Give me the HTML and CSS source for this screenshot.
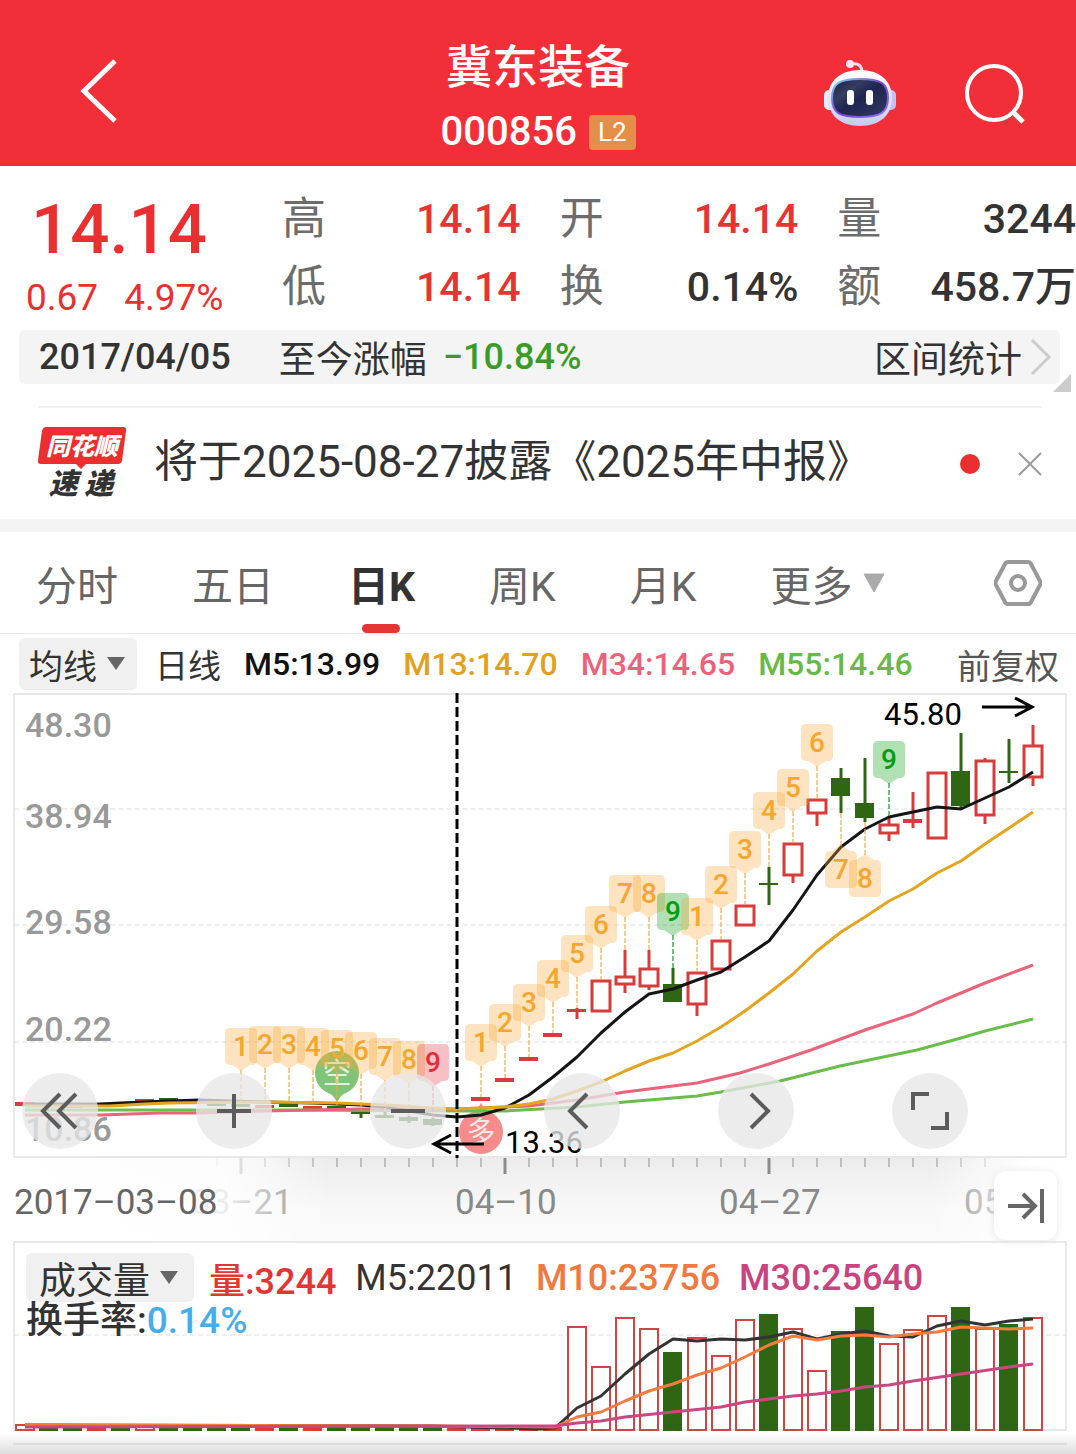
FILE: index.html
```
<!DOCTYPE html>
<html lang="zh-CN">
<head>
    <meta charset="UTF-8">
    <meta name="viewport" content="width=device-width, initial-scale=1.0">
    <title>冀东装备 000856</title>
    <link rel="stylesheet" href="styles.css">
</head>
<body>
    <header class="header">
        <button class="icon-btn back" aria-label="返回">
            <svg width="38" height="64" viewBox="0 0 38 64"><path d="M35 2L4 32L35 62" fill="none" stroke="#fff" stroke-width="5"/></svg>
        </button>
        <div class="stock">
            <h1>冀东装备</h1>
            <div class="stock-code"><span>000856</span><span class="level">L2</span></div>
        </div>
        <div class="header-actions">
            <button class="icon-btn" aria-label="智能助手">
                <svg width="72" height="68" viewBox="0 0 72 68">
                    <defs>
                        <linearGradient id="shell" x1="0" y1="0" x2="0" y2="1"><stop offset="0" stop-color="#fff"/><stop offset="1" stop-color="#c9c8f3"/></linearGradient>
                        <linearGradient id="rim" x1="0" y1="0" x2="1" y2="1"><stop offset="0" stop-color="#7ed8ee"/><stop offset=".5" stop-color="#7a3fd0"/><stop offset="1" stop-color="#8f7cf5"/></linearGradient>
                        <linearGradient id="face" x1="0" y1="0" x2="1" y2="1"><stop offset="0" stop-color="#1b2146"/><stop offset=".3" stop-color="#343c60"/><stop offset=".5" stop-color="#1e2550"/><stop offset="1" stop-color="#333a62"/></linearGradient>
                    </defs>
                    <path d="M27 4Q38 2 38 13" fill="none" stroke="#f3dfee" stroke-width="3"/>
                    <circle cx="26" cy="4" r="4" fill="#f8e6f0"/>
                    <rect x="0" y="30" width="12" height="20" rx="5" fill="#eeeafd"/>
                    <rect x="60" y="30" width="12" height="20" rx="5" fill="#c2c0f5"/>
                    <path d="M36 10C56 10 68 21 68 38S56 66 36 66S4 55 4 38S16 10 36 10Z" fill="url(#shell)"/>
                    <path d="M36 19C56 19 64 23 64 38S56 57 36 57S8 53 8 38S16 19 36 19Z" fill="url(#face)" stroke="url(#rim)" stroke-width="2"/>
                    <rect x="23" y="30" width="7" height="15" rx="3" fill="#fff"/>
                    <rect x="42" y="30" width="7" height="15" rx="3" fill="#fff"/>
                </svg>
            </button>
            <button class="icon-btn" aria-label="搜索">
                <svg width="62" height="62" viewBox="0 0 62 62"><circle cx="30" cy="30" r="27" fill="none" stroke="#fff" stroke-width="4"/><path d="M48 48L59 59" stroke="#fff" stroke-width="5"/></svg>
            </button>
        </div>
    </header>

    <section class="quote">
        <div class="price">
            <div class="price-now">14.14</div>
            <div class="price-change"><span>0.67</span><span>4.97%</span></div>
        </div>
        <dl class="stats">
            <div><dt>高</dt><dd class="up">14.14</dd></div>
            <div><dt>开</dt><dd class="up">14.14</dd></div>
            <div><dt>量</dt><dd>3244</dd></div>
            <div><dt>低</dt><dd class="up">14.14</dd></div>
            <div><dt>换</dt><dd>0.14%</dd></div>
            <div><dt>额</dt><dd>458.7万</dd></div>
        </dl>
    </section>

    <section class="range">
        <span class="range-date">2017/04/05</span>
        <span>至今涨幅</span>
        <span class="down">−10.84%</span>
        <a href="#range" class="range-link">区间统计
            <svg width="22" height="38" viewBox="0 0 22 38"><path d="M2 2L19 19L2 36" fill="none" stroke="#ccc" stroke-width="3"/></svg>
        </a>
        <i class="corner"></i>
    </section>

    <section class="news">
        <svg class="news-logo" width="88" height="78" viewBox="0 0 88 78">
            <path d="M8 2H85Q89 2 88 6L84 36Q83 39 80 39H48L43 44L38 39H3Q-1 39 0 35L4 6Q5 2 8 2Z" fill="#e9302f"/>
            <text x="44" y="30" class="logo-top">同花顺</text>
            <text x="43" y="69" class="logo-bottom">速 递</text>
        </svg>
        <a href="#news" class="news-title">将于2025-08-27披露《2025年中报》</a>
        <i class="dot"></i>
        <button class="icon-btn" aria-label="关闭">
            <svg width="24" height="24" viewBox="0 0 24 24"><path d="M1 1L23 23M23 1L1 23" stroke="#999" stroke-width="2"/></svg>
        </button>
    </section>

    <nav class="tabs">
        <button class="tab">分时</button>
        <button class="tab">五日</button>
        <button class="tab active">日K</button>
        <button class="tab">周K</button>
        <button class="tab">月K</button>
        <button class="tab">更多<svg width="22" height="20" viewBox="0 0 22 20"><path d="M1 1H21L11 19Z" fill="#aaa" stroke="#aaa" stroke-linejoin="round"/></svg></button>
        <button class="icon-btn settings" aria-label="设置">
            <svg width="48" height="46" viewBox="0 0 48 46"><path d="M14 2H34Q36 2 37 4L46 21Q47 23 46 25L37 42Q36 44 34 44H14Q12 44 11 42L2 25Q1 23 2 21L11 4Q12 2 14 2Z" fill="none" stroke="#999" stroke-width="4"/><circle cx="24" cy="23" r="7" fill="none" stroke="#999" stroke-width="4"/></svg>
        </button>
    </nav>

    <div class="legend">
        <label class="picker">
            <select aria-label="主图指标"><option>均线</option></select>
            <svg width="18" height="14" viewBox="0 0 18 14"><path d="M0 0H18L9 13Z" fill="#666"/></svg>
        </label>
        <span class="legend-name">日线</span>
        <span class="ma5">M5:13.99</span>
        <span class="ma13">M13:14.70</span>
        <span class="ma34">M34:14.65</span>
        <span class="ma55">M55:14.46</span>
        <a href="#adjust" class="adjust">前复权</a>
    </div>

    <section class="chart">
        <svg id="kline" viewBox="0 690 1076 551">
            <defs>
                <linearGradient id="axisBg" x1="0" y1="0" x2="0" y2="1"><stop offset="0" stop-color="#ececec"/><stop offset=".6" stop-color="#f8f8f8"/><stop offset="1" stop-color="#fafafa"/></linearGradient>
                <linearGradient id="fadeLeft"><stop offset="0" stop-color="#fff"/><stop offset=".68" stop-color="#fff" stop-opacity=".85"/><stop offset="1" stop-color="#fff" stop-opacity="0"/></linearGradient>
                <linearGradient id="fadeRight"><stop offset="0" stop-color="#fff" stop-opacity="0"/><stop offset="1" stop-color="#fff"/></linearGradient>
            </defs>
        </svg>
        <div class="tools">
            <button class="tool" aria-label="最早"><svg width="40" height="40" viewBox="0 0 40 40"><path d="M20 3L3 20L20 37M36 3L19 20L36 37"/></svg></button>
            <button class="tool" aria-label="放大"><svg width="40" height="40" viewBox="0 0 40 40"><path d="M20 3V37M3 20H37"/></svg></button>
            <button class="tool" aria-label="缩小"><svg width="40" height="40" viewBox="0 0 40 40"><path d="M3 20H37"/></svg></button>
            <button class="tool" aria-label="左移"><svg width="40" height="40" viewBox="0 0 40 40"><path d="M25 3L8 20L25 37"/></svg></button>
            <button class="tool" aria-label="右移"><svg width="40" height="40" viewBox="0 0 40 40"><path d="M15 3L32 20L15 37"/></svg></button>
            <button class="tool" aria-label="全屏"><svg width="40" height="40" viewBox="0 0 40 40"><path d="M3 19V3H19M21 37H37V21"/></svg></button>
        </div>
        <button class="latest" aria-label="最新"><svg width="40" height="36" viewBox="0 0 40 36"><path d="M2 18H28M17 6L29 18L17 30M36 1V35" fill="none" stroke="#666" stroke-width="4"/></svg></button>
    </section>

    <section class="chart">
        <svg id="volume" viewBox="0 1241 1076 192"></svg>
        <div class="volume-legend">
            <div class="volume-row">
                <label class="picker">
                    <select aria-label="副图指标"><option>成交量</option></select>
                    <svg width="18" height="14" viewBox="0 0 18 14"><path d="M0 0H18L9 13Z" fill="#666"/></svg>
                </label>
                <span class="up">量:3244</span>
                <span class="vol5">M5:22011</span>
                <span class="vol10">M10:23756</span>
                <span class="vol30">M30:25640</span>
            </div>
            <div class="turnover">换手率:<span>0.14%</span></div>
        </div>
    </section>
    <div class="next-panel"></div>

    <script src="chart.js"></script>
</body>
</html>
```
FILE: styles.css
```
*{box-sizing:border-box;margin:0;padding:0}
body{font-family:Roboto,"Noto Sans CJK SC",sans-serif;background:#fff;color:#333;overflow-x:hidden}
button{border:none;background:none;font:inherit;color:inherit;cursor:pointer}
a{color:inherit;text-decoration:none}
svg{display:block}
.icon-btn{display:flex;flex:none}
.up{color:#e43434}
.down{color:#3a9c28;font-weight:500}

.header{display:grid;grid-template-columns:1fr auto 1fr;height:166px;padding:34px 50px 0;background:#f22f38;color:#fff}
.back{align-self:center;justify-self:start;margin:0 0 18px 30px}
.stock{display:flex;flex-direction:column;align-items:center}
.stock h1{font-size:46px;line-height:66px;font-weight:500}
.stock-code{display:flex;align-items:center;gap:12px;font-size:40px;line-height:64px;font-weight:500}
.level{padding:0 9px;border-radius:4px;background:#e38f49;font-size:26px;line-height:35px;font-weight:400}
.header-actions{display:flex;align-items:center;justify-content:flex-end;gap:68px;padding-bottom:12px}

.quote{display:flex;height:164px;padding:19px 0 0 26px}
.price{flex:0 0 256px;color:#e92f30;font-weight:500}
.price-now{padding-left:5px;font-size:69px;line-height:90px}
.price-change{display:flex;gap:26px;font-size:37px;line-height:46px;font-weight:400}
.stats{flex:1;display:grid;grid-template-columns:repeat(3,1fr);align-content:start;column-gap:39px;white-space:nowrap}
.stats div{display:flex;justify-content:space-between;height:68px;line-height:68px;font-size:41px}
.stats dt{font-size:44px;color:#6c6c6c}
.stats dd{font-weight:500}

.range{position:relative;display:flex;align-items:center;height:54px;margin:0 16px 0 19px;padding:0 8px 0 20px;border-radius:6px;background:#f4f4f4;font-size:37px;white-space:nowrap}
.range-date{margin-right:48px;font-size:36px;font-weight:500}
.range .down{margin-left:16px;font-size:36px}
.range-link{display:flex;align-items:center;gap:8px;margin-left:auto}
.corner{position:absolute;right:-11px;bottom:-8px;border-left:18px solid transparent;border-bottom:18px solid #ccc}

.news{display:flex;align-items:center;height:113px;margin:22px 34px 0 38px;border-top:2px solid #f2f2f2}
.news-logo{flex:none;margin-right:28px;overflow:visible}
.logo-top,.logo-bottom{font-family:"Noto Sans CJK SC",sans-serif;font-weight:900;font-style:italic;text-anchor:middle}
.logo-top{font-size:24px;fill:#fff}
.logo-bottom{font-size:29px;fill:#333}
.news-title{flex:1;font-size:44px;line-height:56px;padding-bottom:4px;white-space:nowrap}
.dot{width:20px;height:20px;margin-right:38px;border-radius:50%;background:#e9302f}

.tabs{display:flex;gap:74px;height:115px;padding:0 34px 0 36px;border-top:13px solid #f4f4f4;border-bottom:1px solid #e8e8e8;font-size:41px;color:#666}
.tab{position:relative;display:flex;align-items:center;gap:10px;white-space:nowrap}
.tab.active{color:#333;font-weight:700}
.tab.active::after{content:"";position:absolute;left:50%;bottom:0;width:38px;height:9px;margin-left:-20px;border-radius:5px;background:#e43434}
.settings{align-items:center;margin-left:auto}

.legend{display:flex;align-items:center;gap:23px;height:56px;padding:4px 17px 0 19px;font-size:32px;font-weight:500;white-space:nowrap}
.picker{display:flex;align-items:center;gap:10px;height:52px;padding:0 12px 0 10px;border-radius:6px;background:#f0f0f0}
.picker select{border:none;background:none;appearance:none;outline:none;font:400 34px "Noto Sans CJK SC",sans-serif;color:#333}
.legend-name{margin-left:-5px;font-size:33px;font-weight:400}
.ma5{color:#111}
.ma13{color:#e3a01d}
.ma34{color:#ec627a}
.ma55{color:#66ba48}
.adjust{margin-left:auto;font-size:34px;font-weight:400;color:#555}

.chart{position:relative}
.chart>svg{width:100%;height:auto}
.scale{font-size:34px;font-weight:500;fill:#999}
.date{font-size:35px;fill:#888}
.date.current{fill:#666}
.extreme{font-size:31px;fill:#000}
.tag{font-size:28px;font-weight:500;text-anchor:middle}
.pin{font-size:29px;fill:#fff;fill-opacity:.8;text-anchor:middle}
.tools{position:absolute;left:2%;right:10%;bottom:92px;display:flex;justify-content:space-between}
.tool{display:flex;align-items:center;justify-content:center;width:76px;height:76px;border-radius:50%;background:rgba(231,231,231,.78)}
.tool path{fill:none;stroke:#5c5c5c;stroke-width:4}
.latest{position:absolute;right:19px;bottom:1px;display:flex;align-items:center;justify-content:center;width:63px;height:69px;border-radius:12px;background:#fff;box-shadow:0 1px 8px rgba(0,0,0,.1)}

.volume-legend{position:absolute;left:26px;top:12px;font-size:36px;font-weight:500;white-space:nowrap}
.volume-row{display:flex;align-items:center;gap:19px;height:49px}
.volume-row .picker{height:49px;padding:0 16px 0 13px;margin-right:-4px}
.volume-row select{font-size:37px}
.vol5{font-weight:400}
.vol10{color:#f0793f}
.vol30{color:#c9447f}
.turnover{font-size:37px;line-height:38px}
.turnover span{color:#44aeed}
.next-panel{height:21px;background:linear-gradient(#fff,#dedede)}
.next-panel::before{content:"";display:block;height:21px;margin:0 9px 0 13px;background:linear-gradient(#dcdcdc,#dcdcdc) 0 10px/100% 2px no-repeat}
```
FILE: chart.js
```
const NS = 'http://www.w3.org/2000/svg';
const RED = '#d93a3a';
const GREEN = '#2f6614';

function add(parent, name, attrs, text) {
    const el = document.createElementNS(NS, name);
    Object.entries(attrs).forEach(([key, value]) => el.setAttribute(key, value));
    if (text) el.textContent = text;
    parent.appendChild(el);
    return el;
}

function line(parent, x1, y1, x2, y2, stroke, width, dash) {
    add(parent, 'line', {x1, y1, x2, y2, stroke, 'stroke-width': width, 'stroke-dasharray': dash || 'none'});
}

function curve(parent, points, stroke) {
    add(parent, 'polyline', {points, fill: 'none', stroke, 'stroke-width': 3, 'stroke-linejoin': 'round'});
}

// x, 最高, 实体上沿, 实体下沿, 最低, 颜色
const candles = [
    [25, 1102, 1102, 1106, 1106, 'r'], [49, 1104, 1104, 1107, 1107, 'g'], [73, 1105, 1105, 1108, 1108, 'r'],
    [97, 1103, 1103, 1106, 1106, 'r'], [121, 1103, 1103, 1106, 1106, 'g'],
    [145, 1099, 1099, 1102, 1102, 'r'], [169, 1098, 1098, 1101, 1101, 'g'], [193, 1099, 1099, 1102, 1102, 'g'],
    [217, 1104, 1104, 1106, 1106, 'g'], [241, 1104, 1104, 1107, 1107, 'g'], [265, 1105, 1105, 1108, 1108, 'r'],
    [289, 1104, 1104, 1107, 1107, 'g'], [313, 1106, 1106, 1109, 1109, 'r'], [337, 1106, 1106, 1109, 1109, 'g'],
    [361, 1111, 1111, 1114, 1118, 'g'], [385, 1112, 1115, 1118, 1118, 'g'], [409, 1116, 1117, 1121, 1123, 'g'],
    [433, 1118, 1119, 1125, 1126, 'g'], [481, 1097, 1097, 1101, 1101, 'r'], [505, 1078, 1078, 1082, 1082, 'r'],
    [529, 1057, 1057, 1061, 1061, 'r'], [553, 1033, 1033, 1037, 1037, 'r'], [577, 1008, 1009, 1012, 1019, 'r'],
    [601, 980, 980, 1012, 1012, 'h'], [625, 950, 976, 985, 993, 'h'], [649, 950, 968, 987, 990, 'h'],
    [673, 968, 984, 1002, 1002, 'g'], [697, 972, 972, 1005, 1016, 'h'], [721, 940, 940, 970, 970, 'h'],
    [745, 905, 905, 926, 926, 'h'], [769, 867, 883, 885, 905, 'g'], [793, 843, 843, 876, 883, 'h'],
    [817, 799, 799, 814, 826, 'h'], [841, 768, 778, 796, 813, 'g'], [865, 758, 803, 818, 822, 'g'],
    [889, 818, 824, 834, 841, 'h'], [913, 792, 819, 823, 828, 'r'], [937, 772, 772, 839, 839, 'h'],
    [961, 733, 771, 806, 808, 'g'], [985, 758, 760, 816, 824, 'h'], [1009, 739, 771, 773, 783, 'g'],
    [1033, 725, 745, 778, 786, 'h']
];

// x, 标签上沿, 数字, 连线终点
const tags = [
    [241, 1028, 1, 1103], [265, 1026, 2, 1104], [289, 1026, 3, 1103], [313, 1028, 4, 1105], [337, 1030, 5, 1105],
    [361, 1032, 6, 1110], [385, 1038, 7, 1112], [409, 1041, 8, 1116], [433, 1044, 9, 1118, 'red'],
    [481, 1024, 1, 1097], [505, 1004, 2, 1078], [529, 984, 3, 1057], [553, 960, 4, 1033], [577, 935, 5, 1008],
    [601, 906, 6, 980], [625, 875, 7, 950], [649, 875, 8, 950], [673, 893, 9, 968, 'green'], [697, 898, 1, 972],
    [721, 866, 2, 940], [745, 831, 3, 905], [769, 792, 4, 867], [793, 769, 5, 843], [817, 724, 6, 799],
    [841, 851, 7, 813], [865, 860, 8, 822], [889, 741, 9, 818, 'green']
];
const tagColors = {
    orange: ['#f9a938', '#f5a62d'],
    red: ['#e83c46', '#dc3038'],
    green: ['#0b9e18', '#089c14']
};

function drawTag([x, y, num, end, color = 'orange'], svg) {
    const [fill, text] = tagColors[color];
    const below = end < y;
    line(svg, x, below ? y - 5 : y + 42, x, end, fill, 2, '5 2');
    svg.lastChild.setAttribute('opacity', .6);
    const pointer = below ? `M${x - 9} ${y}L${x} ${y - 6}L${x + 9} ${y}Z` : `M${x - 9} ${y + 37}L${x} ${y + 43}L${x + 9} ${y + 37}Z`;
    const box = `M${x - 11} ${y}h22q5 0 5 5v27q0 5 -5 5h-22q-5 0 -5 -5v-27q0 -5 5 -5Z`;
    add(svg, 'path', {d: box + pointer, fill, 'fill-opacity': .32});
    add(svg, 'text', {x, y: y + 28, fill: text, class: 'tag'}, String(num));
}

function drawPin(svg, x, y, up, fill, label) {
    const s = up ? -1 : 1;
    add(svg, 'circle', {cx: x, cy: y, r: 22, fill});
    add(svg, 'path', {d: `M${x - 16} ${y + 14 * s}Q${x - 3} ${y + 22 * s} ${x} ${y + 29 * s}Q${x + 3} ${y + 22 * s} ${x + 16} ${y + 14 * s}Z`, fill});
    add(svg, 'text', {x, y: y + 11, class: 'pin'}, label);
}

function drawKline() {
    const svg = document.getElementById('kline');

    // 时间轴
    add(svg, 'rect', {x: 0, y: 1158, width: 1076, height: 83, fill: 'url(#axisBg)'});
    for (let x = 217; x < 1000; x += 24) {
        const major = (x - 241) % 264 === 0;
        line(svg, x, 1158, x, major ? 1174 : 1167, '#8c8c8c', major ? 3 : 1);
    }
    add(svg, 'text', {x: 191, y: 1214, class: 'date'}, '03–21');
    add(svg, 'text', {x: 455, y: 1214, class: 'date'}, '04–10');
    add(svg, 'text', {x: 719, y: 1214, class: 'date'}, '04–27');
    add(svg, 'text', {x: 964, y: 1214, class: 'date'}, '05');
    add(svg, 'rect', {x: 0, y: 1158, width: 330, height: 83, fill: 'url(#fadeLeft)'});
    add(svg, 'rect', {x: 930, y: 1158, width: 100, height: 83, fill: 'url(#fadeRight)'});
    add(svg, 'rect', {x: 1030, y: 1158, width: 46, height: 83, fill: '#fff'});
    add(svg, 'text', {x: 14, y: 1214, class: 'date current'}, '2017–03–08');

    add(svg, 'rect', {x: 14, y: 694, width: 1052, height: 463, fill: 'none', stroke: '#e8e8e8', 'stroke-width': 2});
    [809, 925, 1042].forEach(y => line(svg, 14, y, 1066, y, '#dedede', 1, '5 3'));
    [['48.30', 737], ['38.94', 828], ['29.58', 934], ['20.22', 1041], ['10.86', 1141]].forEach(([label, y]) => {
        add(svg, 'text', {x: 25, y, class: 'scale'}, label);
    });

    drawPin(svg, 337, 1073, false, '#82c477', '空');
    drawPin(svg, 481, 1132, true, '#f58b8b', '多');

    candles.forEach(([x, high, top, bottom, low, type]) => {
        const color = type === 'g' ? GREEN : RED;
        if (high < top) line(svg, x, high, x, top, color, 3);
        if (low > bottom) line(svg, x, bottom, x, low, color, 3);
        if (type === 'h') {
            add(svg, 'rect', {x: x - 9, y: top + 1, width: 18, height: bottom - top - 2, fill: '#fff', stroke: color, 'stroke-width': 3});
        } else {
            add(svg, 'rect', {x: x - 10, y: top, width: 19, height: bottom - top, fill: color});
        }
    });

    // 均线
    curve(svg, '25,1110 300,1110 457,1111 505,1111 577,1107 625,1102 697,1096 721,1092 780,1081 840,1066 917,1050 961,1038 985,1031 1033,1019', '#6abd4a');
    curve(svg, '25,1115 100,1115 160,1113 200,1113 265,1111 361,1109 457,1109 529,1106 577,1100 625,1092 697,1083 740,1073 769,1064 811,1050 865,1030 913,1014 937,1003 985,983 1033,965', '#e9637b');
    curve(svg, '25,1104 100,1104 121,1103 145,1102 169,1101 200,1100 265,1102 313,1103 361,1105 385,1107 409,1111 433,1115 457,1117 481,1115 505,1108 529,1095 553,1077 577,1057 601,1033 625,1012 649,994 673,989 697,980 721,972 745,957 769,941 793,910 817,875 841,847 865,829 889,817 913,812 937,807 961,809 985,798 1009,787 1033,772', '#151515');
    curve(svg, '25,1106 110,1106 145,1104 169,1103 265,1102 337,1103 385,1105 433,1108 457,1109 481,1108 505,1107 529,1104 553,1099 577,1091 601,1082 625,1071 649,1061 673,1053 697,1041 721,1027 745,1011 769,993 793,974 817,951 841,932 865,917 889,901 913,889 937,873 961,861 985,844 1009,828 1033,812', '#e3a51f');

    tags.forEach(tag => drawTag(tag, svg));

    // 十字光标与最高最低价
    line(svg, 457, 693, 457, 1158, '#000', 3, '10 4');
    add(svg, 'path', {d: 'M484 1144H434M451 1135L434 1144L451 1153M982 707H1032M1015 698L1032 707L1015 716', fill: 'none', stroke: '#000', 'stroke-width': 3});
    add(svg, 'text', {x: 505, y: 1153, class: 'extreme'}, '13.36');
    add(svg, 'text', {x: 884, y: 725, class: 'extreme'}, '45.80');
}

// 有量的柱: x, 上沿, 颜色
const bars = [
    [577, 1327, 'h'], [601, 1367, 'h'], [625, 1318, 'h'], [649, 1329, 'h'], [673, 1352, 'g'], [697, 1338, 'h'],
    [721, 1356, 'h'], [745, 1320, 'h'], [769, 1314, 'g'], [793, 1329, 'h'], [817, 1371, 'h'], [841, 1331, 'g'],
    [865, 1307, 'g'], [889, 1344, 'h'], [913, 1330, 'h'], [937, 1316, 'h'], [961, 1307, 'g'], [985, 1329, 'h'],
    [1009, 1324, 'g'], [1033, 1318, 'h']
];
const quietDays = 'hggrghggggrgrgggggrrrrr';

function drawVolume() {
    const svg = document.getElementById('volume');
    add(svg, 'rect', {x: 14, y: 1242, width: 1052, height: 188, fill: 'none', stroke: '#e8e8e8', 'stroke-width': 2});
    line(svg, 14, 1335, 1066, 1335, '#dedede', 1, '5 3');

    [...quietDays].forEach((type, i) => {
        bars.push([25 + i * 24, type === 'h' ? 1425 : 1427, type]);
    });
    bars.forEach(([x, top, type]) => {
        if (type === 'h') {
            add(svg, 'rect', {x: x - 9, y: top, width: 18, height: 1430 - top, fill: '#fff', stroke: '#cf4444', 'stroke-width': 2});
        } else {
            add(svg, 'rect', {x: x - 10, y: top, width: 19, height: 1431 - top, fill: type === 'g' ? GREEN : RED});
        }
    });

    curve(svg, '25,1425 433,1426 540,1429 555,1428 577,1408 601,1396 625,1374 649,1354 673,1339 697,1341 721,1339 745,1340 769,1337 793,1332 817,1339 841,1334 865,1331 889,1336 913,1337 937,1326 961,1321 985,1325 1009,1321 1033,1319', '#333');
    curve(svg, '25,1425 433,1426 555,1427 577,1417 601,1412 625,1401 649,1391 673,1384 697,1375 721,1368 745,1357 769,1345 793,1336 817,1340 841,1336 865,1335 889,1337 913,1334 937,1332 961,1327 985,1328 1009,1329 1033,1328', '#f27c40');
    curve(svg, '25,1427 555,1426 577,1423 601,1421 625,1417 673,1412 721,1407 745,1402 769,1399 793,1396 817,1394 841,1391 865,1387 889,1385 913,1381 961,1374 1009,1367 1033,1364', '#cc4680');
}

drawKline();
drawVolume();
```
